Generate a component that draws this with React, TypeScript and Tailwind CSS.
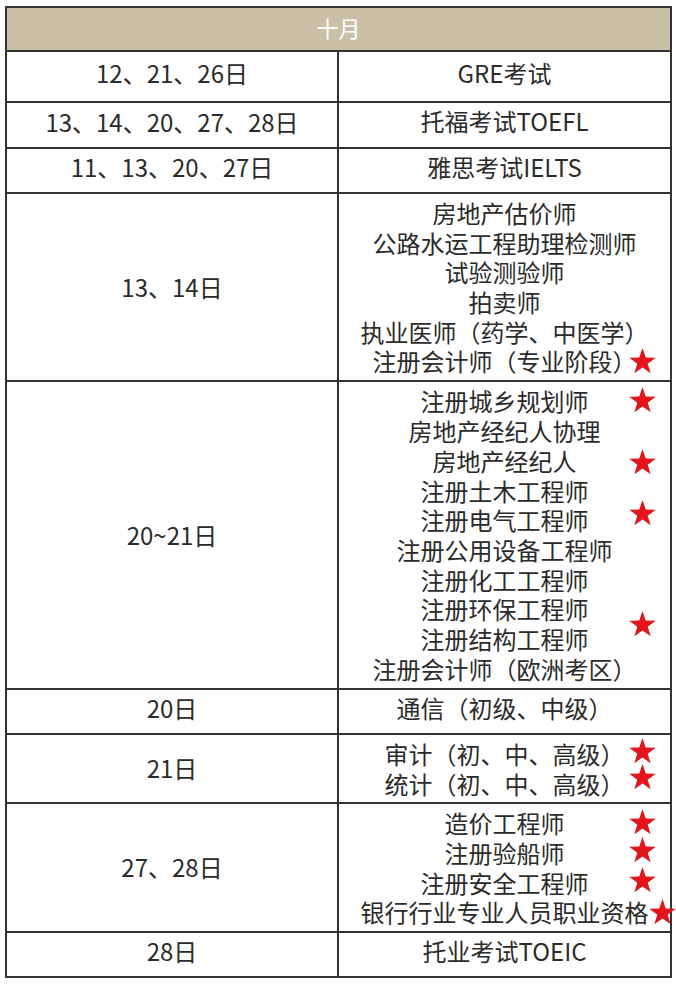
type Line = { text: string; star?: number; starLeft?: boolean };
type Row = { date: string; h: string; lines: Line[] };

const rows: Row[] = [
  { date: "12、21、26日", h: "h-[51px]", lines: [{ text: "GRE考试" }] },
  { date: "13、14、20、27、28日", h: "h-[46px]", lines: [{ text: "托福考试TOEFL" }] },
  { date: "11、13、20、27日", h: "h-[45px]", lines: [{ text: "雅思考试IELTS" }] },
  {
    date: "13、14日",
    h: "h-[188px]",
    lines: [
      { text: "房地产估价师" },
      { text: "公路水运工程助理检测师" },
      { text: "试验测验师" },
      { text: "拍卖师" },
      { text: "执业医师（药学、中医学）" },
      { text: "注册会计师（专业阶段）", star: 0 },
    ],
  },
  {
    date: "20~21日",
    h: "h-[308px]",
    lines: [
      { text: "注册城乡规划师", star: -1 },
      { text: "房地产经纪人协理" },
      { text: "房地产经纪人", star: 1 },
      { text: "注册土木工程师" },
      { text: "注册电气工程师", star: -7 },
      { text: "注册公用设备工程师" },
      { text: "注册化工工程师" },
      { text: "注册环保工程师", star: 15 },
      { text: "注册结构工程师" },
      { text: "注册会计师（欧洲考区）" },
    ],
  },
  { date: "20日", h: "h-[45px]", lines: [{ text: "通信（初级、中级）" }] },
  {
    date: "21日",
    h: "h-[69px]",
    lines: [
      { text: "审计（初、中、高级）", star: -3 },
      { text: "统计（初、中、高级）", star: -6 },
    ],
  },
  {
    date: "27、28日",
    h: "h-[129px]",
    lines: [
      { text: "造价工程师", star: -1 },
      { text: "注册验船师", star: -3 },
      { text: "注册安全工程师", star: -2 },
      { text: "银行行业专业人员职业资格", star: 0, starLeft: true },
    ],
  },
  { date: "28日", h: "h-[45px]", lines: [{ text: "托业考试TOEIC" }] },
];

function Star({ className, style }: { className: string; style?: React.CSSProperties }) {
  return (
    <svg viewBox="0 0 26 25" className={className} style={style}>
      <polygon
        points="13,0 16.1,9.2 25.8,9.3 18,15.1 20.9,24.4 13,18.8 5.1,24.4 8,15.1 0.2,9.3 9.9,9.2"
        fill="#e3141b"
      />
    </svg>
  );
}

export default function App() {
  return (
    <div className="bg-white w-[676px] h-[984px] pt-[6px] pl-[5px] overflow-hidden font-['Noto_Sans_CJK_SC','Noto_Sans',sans-serif] text-[#2b2b2b]">
      <table className="w-[665px] border-collapse border-2 border-[#333] table-fixed">
        <colgroup>
          <col className="w-[332px]" />
          <col className="w-[333px]" />
        </colgroup>
        <tbody>
          <tr className="h-[44px] bg-[#c9c0a7]">
            <td colSpan={2} className="border-2 border-[#333] text-center text-white text-[22px] leading-none p-0 pb-[4px]">
              十月
            </td>
          </tr>
          {rows.map((r) => {
            const single = r.lines.length === 1;
            return (
              <tr key={r.date + r.lines[0].text} className={r.h}>
                <td
                  className={
                    single
                      ? "border-2 border-[#333] text-center align-middle text-[24px] leading-none p-0 pb-[7px]"
                      : "border-2 border-[#333] text-center align-middle text-[24px] leading-none p-0 pb-[1px]"
                  }
                >
                  {r.date}
                </td>
                <td
                  className={
                    single
                      ? "border-2 border-[#333] text-center align-middle text-[24px] leading-[29.7px] p-0 pb-[8px]"
                      : "border-2 border-[#333] text-center align-middle text-[24px] leading-[29.7px] p-0"
                  }
                >
                  {r.lines.map((l) => (
                    <div key={l.text} className="relative">
                      <span className="relative inline-block">
                        {l.text}
                        {l.star !== undefined && l.starLeft && (
                          <Star
                            className="absolute left-full top-1/2 w-[27px] h-[26px] -mt-[13px]"
                            style={{ transform: `translateY(${l.star}px)` }}
                          />
                        )}
                      </span>
                      {l.star !== undefined && !l.starLeft && (
                        <Star
                          className="absolute right-[14px] top-1/2 w-[27px] h-[26px] -mt-[13px]"
                          style={{ transform: `translateY(${l.star}px)` }}
                        />
                      )}
                    </div>
                  ))}
                </td>
              </tr>
            );
          })}
        </tbody>
      </table>
    </div>
  );
}
